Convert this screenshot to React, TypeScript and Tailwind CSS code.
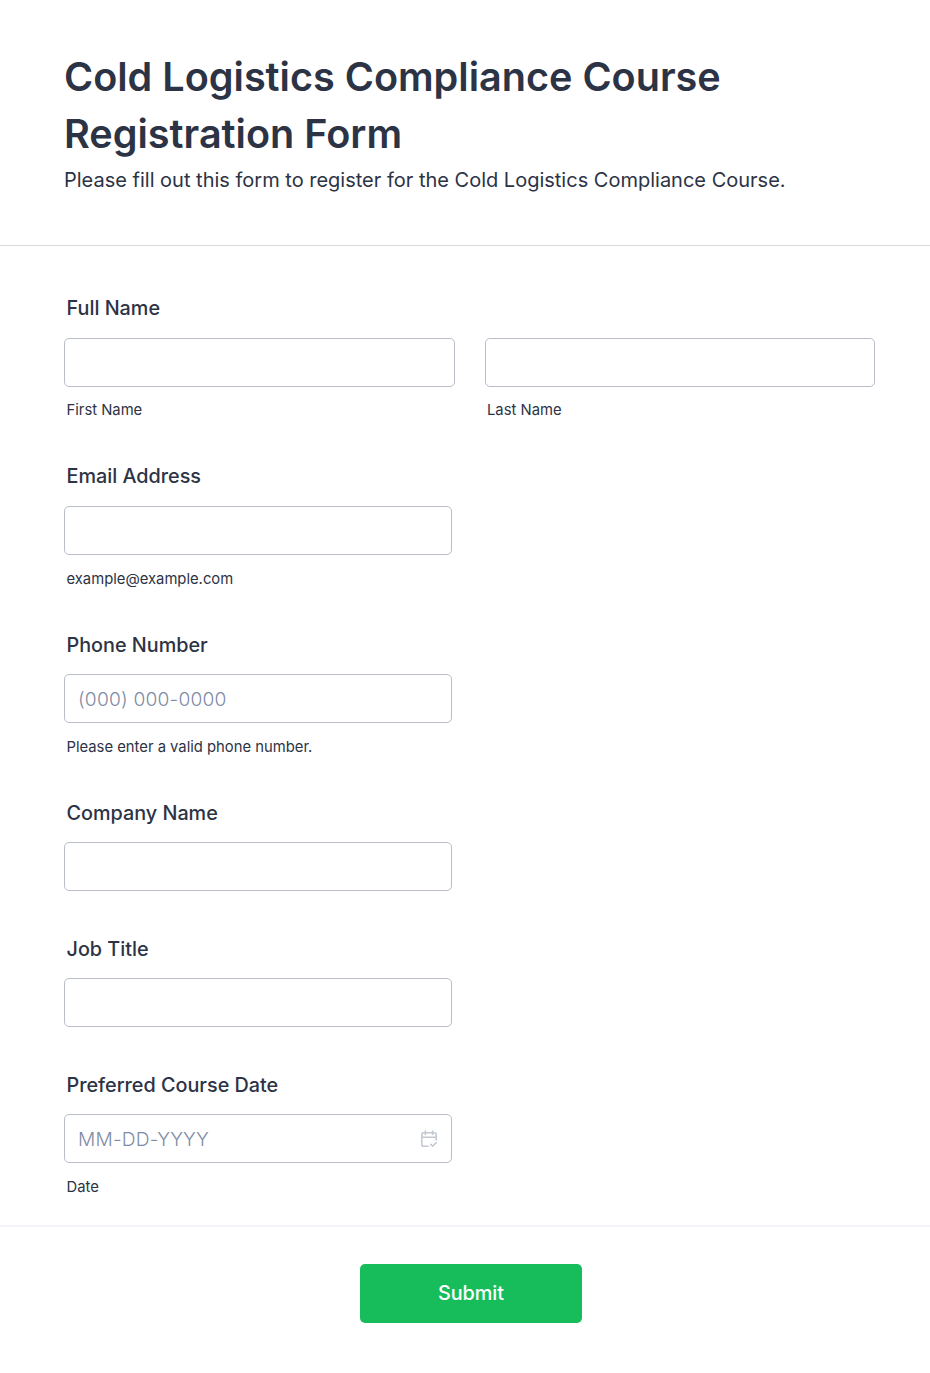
const Label = ({ children }: { children: string }) => (
  <label className="block pl-[2.5px] text-[19.8px] leading-[28px] font-[450] text-[#2c3345]">{children}</label>
);

const Sub = ({ children, first }: { children: string; first?: boolean }) => (
  <p className={`${first ? 'mt-[15px]' : 'mt-[16px]'} pl-[2.5px] text-[14.8px] leading-[17px] text-[#2c3345]`}>{children}</p>
);

const Field = ({ placeholder, icon }: { placeholder?: string; icon?: boolean }) => (
  <div className="h-[49px] border border-[#b8bdc9] rounded-[5px] bg-white flex items-center justify-between pl-[13px] pr-[13px]">
    <span className="pt-[2px] text-[19.2px] font-light text-[#7f8ca6] tracking-[0.01em]">{placeholder}</span>
    {icon && (
      <svg width="18" height="18" viewBox="0 0 20 20" fill="none" stroke="#c3c8d3" strokeWidth="1.7" strokeLinecap="round" strokeLinejoin="round">
        <path d="M9 18H4a2 2 0 0 1-2-2V5a2 2 0 0 1 2-2h12a2 2 0 0 1 2 2v6" />
        <path d="M2 8h16M6 1v4M14 1v4" />
        <path d="M12 16l2 2 4-4" />
      </svg>
    )}
  </div>
);

export default function App() {
  return (
    <div className="min-h-[1373px] bg-white font-['Inter',sans-serif]">
      <header className="h-[246px] border-b border-[#d8dae0] pl-[64px] pr-[55px] pt-[49px]">
        <h1 className="text-[39.6px] leading-[57px] font-semibold text-[#2c3345]">
          Cold Logistics Compliance Course Registration Form
        </h1>
        <p className="text-[20px] leading-[28px] font-[435] text-[#2c3345] mt-[3px]">
          Please fill out this form to register for the Cold Logistics Compliance Course.
        </p>
      </header>

      <main className="h-[981px] border-b-2 border-[#f3f3fe] pl-[64px] pr-[55px] pt-[48px]">
        <section className="h-[168px]">
          <Label>Full Name</Label>
          <div className="mt-[16px] grid grid-cols-2 gap-[30px]">
            <div>
              <Field />
              <Sub first>First Name</Sub>
            </div>
            <div>
              <Field />
              <Sub first>Last Name</Sub>
            </div>
          </div>
        </section>

        <section className="h-[169px] w-[388px]">
          <Label>Email Address</Label>
          <div className="mt-[16px]"><Field /></div>
          <Sub>example@example.com</Sub>
        </section>

        <section className="h-[168px] w-[388px]">
          <Label>Phone Number</Label>
          <div className="mt-[15px]"><Field placeholder="(000) 000-0000" /></div>
          <Sub>Please enter a valid phone number.</Sub>
        </section>

        <section className="h-[136px] w-[388px]">
          <Label>Company Name</Label>
          <div className="mt-[15px]"><Field /></div>
        </section>

        <section className="h-[136px] w-[388px]">
          <Label>Job Title</Label>
          <div className="mt-[15px]"><Field /></div>
        </section>

        <section className="w-[388px]">
          <Label>Preferred Course Date</Label>
          <div className="mt-[15px]"><Field placeholder="MM-DD-YYYY" icon /></div>
          <Sub>Date</Sub>
        </section>
      </main>

      <footer className="flex justify-center pt-[37px] pl-[12px]">
        <button className="w-[222px] h-[59px] pt-[1px] rounded-[5px] bg-[#18bd5b] text-white text-[19.8px] font-medium">
          Submit
        </button>
      </footer>
    </div>
  );
}
